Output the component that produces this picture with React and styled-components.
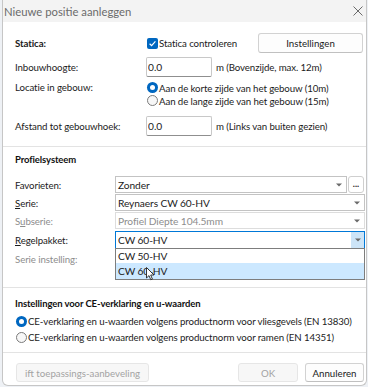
import React from 'react';
import styled, { createGlobalStyle, css } from 'styled-components';

const FONT = `'Lato', 'Noto Sans', sans-serif`;

const GlobalStyle = createGlobalStyle`
  html, body { margin: 0; padding: 0; }
  body {
    background: #eef1f5;
    font-family: ${FONT};
    font-size: 9.7px;
    letter-spacing: -0.1px;
    color: #1b1b1b;
  }
  * { box-sizing: border-box; }
`;

const Window = styled.div`
  margin-left: 2px;
  width: 365px;
  height: 386px;
  background: #fff;
  border: 1px solid #c6c6c6;
  border-top: none;
  border-radius: 0 0 6px 6px;
  display: flex;
  flex-direction: column;
  overflow: hidden;
`;

const TitleBar = styled.div`
  height: 22px;
  flex: none;
  background: #f3f3f3;
  display: flex;
  align-items: center;
  justify-content: space-between;
  padding: 0 3px 0 1px;
`;

const Title = styled.span`
  font-size: 11.3px;
  letter-spacing: 0;
  color: #6b6b6b;
`;

const Section = styled.section`
  padding: ${p => p.$pad};
  display: flex;
  flex-direction: column;
`;

const Divider = styled.div`
  height: 1px;
  flex: none;
  background: #e3e3e3;
`;

const SectionTitle = styled.div`
  height: 14px;
  line-height: 14px;
  font-weight: 700;
  font-size: 9.5px;
  color: #111;
`;

const Row = styled.div`
  display: grid;
  grid-template-columns: ${p => p.$cols};
  align-items: ${p => p.$align || 'center'};
  height: ${p => p.$h}px;
  margin-top: ${p => p.$mt || 0}px;
  position: relative;
`;

const Label = styled.span`
  color: ${p => (p.$disabled ? '#8d8d8d' : '#1b1b1b')};
  line-height: ${p => p.$lh || 'normal'};
  font-weight: ${p => (p.$bold ? 700 : 400)};
  white-space: nowrap;
`;

const Key = styled.u`
  text-decoration-thickness: 1px;
  text-underline-offset: 1px;
`;

const Inline = styled.div`
  display: flex;
  align-items: center;
  gap: ${p => p.$gap || 0}px;
  height: 100%;
  white-space: nowrap;
`;

const Stack = styled.div`
  display: flex;
  flex-direction: column;
  margin-top: ${p => p.$mt || 0}px;
`;

const CheckBox = styled.span`
  width: 11px;
  height: 11px;
  margin-left: 1px;
  border-radius: 2px;
  background: #0067c0;
  display: inline-flex;
  align-items: center;
  justify-content: center;
  flex: none;
`;

const RadioDot = styled.span`
  width: 11px;
  height: 11px;
  margin-left: 1px;
  border-radius: 50%;
  flex: none;
  ${p =>
    p.$checked
      ? css`
          background: #0067c0;
          display: inline-flex;
          align-items: center;
          justify-content: center;
          &::after {
            content: '';
            width: 5px;
            height: 5px;
            border-radius: 50%;
            background: #fff;
          }
        `
      : css`
          border: 1px solid #7b7b7b;
          background: #f7f7f7;
        `}
`;

const Option = styled.div`
  display: flex;
  align-items: center;
  gap: 1px;
  height: ${p => p.$h}px;
  white-space: nowrap;
`;

const TextInput = styled.input`
  width: 66px;
  height: 20px;
  border: 1px solid #c8c8c8;
  border-bottom-color: #8f8f8f;
  border-radius: 2px;
  padding: 0 0 0 1px;
  font: inherit;
  font-size: 10.2px;
  color: #1b1b1b;
  background: #fff;
  outline: none;
`;

const Unit = styled.span`
  margin-left: 4px;
`;

const Button = styled.button`
  height: ${p => p.$h || 20}px;
  width: ${p => p.$w}px;
  margin-right: ${p => p.$mr || 0}px;
  border-radius: 3px;
  font: inherit;
  padding: 0;
  ${p =>
    p.disabled
      ? css`
          background: #f7f7f7;
          border: 1px solid #e6e6e6;
          color: #a3a3a3;
        `
      : css`
          background: #fdfdfd;
          border: 1px solid #d2d2d2;
          border-bottom-color: #c0c0c0;
          color: #1b1b1b;
        `}
`;

const Combo = styled.div`
  position: relative;
  height: 100%;
  display: flex;
  align-items: center;
  justify-content: space-between;
  padding-left: 2px;
  font-size: 10.2px;
  background: #fff;
  border: 1px solid ${p => (p.$active ? '#0078d7' : p.$disabled ? '#dddddd' : '#c3c3c3')};
  color: ${p => (p.$disabled ? '#8d8d8d' : '#1b1b1b')};
  flex: ${p => (p.$grow ? 1 : 'none')};
`;

const ArrowBox = styled.span`
  align-self: stretch;
  width: 13px;
  display: flex;
  align-items: center;
  justify-content: center;
  background: ${p => (p.$active ? '#cce4f7' : 'transparent')};
  margin-right: ${p => (p.$active ? 0 : 1)}px;
`;

const MoreButton = styled.span`
  width: 16px;
  height: 100%;
  flex: none;
  margin-left: 1px;
  margin-right: 1px;
  border: 1px solid #cfcfcf;
  border-radius: 3px;
  display: flex;
  align-items: center;
  justify-content: center;
  font-weight: 700;
  font-size: 9px;
  letter-spacing: 0;
  line-height: 1;
  padding-bottom: 2px;
`;

const ComboWrap = styled.div`
  display: flex;
  height: 100%;
`;

const DropList = styled.ul`
  position: absolute;
  top: 100%;
  left: -1px;
  right: -1px;
  margin: 0;
  padding: 0;
  list-style: none;
  background: #fff;
  border: 1px solid #7d7d7d;
  z-index: 5;
`;

const DropItem = styled.li`
  height: ${p => p.$h}px;
  line-height: ${p => p.$h}px;
  padding-left: 2px;
  background: ${p => (p.$selected ? '#cce8ff' : '#fff')};
  position: relative;
`;

const Cursor = styled.svg`
  position: absolute;
  left: 30px;
  top: 4px;
`;

const Footer = styled.div`
  flex: 1;
  display: flex;
  justify-content: space-between;
  align-items: flex-start;
  padding: 10px 2px 0 13px;
`;

const ButtonGroup = styled.div`
  display: flex;
  gap: 7px;
`;

const Arrow = () => (
  <svg width="6" height="4" viewBox="0 0 6 4">
    <path d="M0 0.5 H6 L3 3.5 Z" fill="#6a6a6a" />
  </svg>
);

const Check = () => (
  <svg width="9" height="9" viewBox="0 0 9 9">
    <path d="M1.6 4.7 L3.6 6.6 L7.4 2.4" fill="none" stroke="#fff" strokeWidth="1.2" />
  </svg>
);

const CloseIcon = () => (
  <svg width="10" height="10" viewBox="0 0 10 10">
    <path d="M0.5 0.5 L9.5 9.5 M9.5 0.5 L0.5 9.5" stroke="#6a6a6a" strokeWidth="1" />
  </svg>
);

export default function App() {
  return (
    <>
      <GlobalStyle />
      <Window>
        <TitleBar>
          <Title>Nieuwe positie aanleggen</Title>
          <CloseIcon />
        </TitleBar>

        <Section $pad="11px 1px 10px 12px">
          <Row $cols="131px 1fr auto" $h={20}>
            <Label $bold>Statica:</Label>
            <Inline $gap={1}>
              <CheckBox>
                <Check />
              </CheckBox>
              <span>Statica controleren</span>
            </Inline>
            <Button $w={105} $mr={2}>Instellingen</Button>
          </Row>
          <Row $cols="131px 1fr" $h={20} $mt={4}>
            <Label>Inbouwhoogte:</Label>
            <Inline>
              <TextInput defaultValue="0.0" readOnly />
              <Unit>m (Bovenzijde, max. 12m)</Unit>
            </Inline>
          </Row>
          <Row $cols="131px 1fr" $h={26} $mt={4} $align="start">
            <Label $lh="13px">Locatie in gebouw:</Label>
            <Stack>
              <Option $h={13}>
                <RadioDot $checked />
                <span>Aan de korte zijde van het gebouw (10m)</span>
              </Option>
              <Option $h={13}>
                <RadioDot />
                <span>Aan de lange zijde van het gebouw (15m)</span>
              </Option>
            </Stack>
          </Row>
          <Row $cols="131px 1fr" $h={20} $mt={9}>
            <Label>Afstand tot gebouwhoek:</Label>
            <Inline>
              <TextInput defaultValue="0.0" readOnly />
              <Unit>m (Links van buiten gezien)</Unit>
            </Inline>
          </Row>
        </Section>
        <Divider />

        <Section $pad="6px 1px 19px 12px">
          <SectionTitle>Profielsysteem</SectionTitle>
          <Row $cols="100px 1fr" $h={17} $mt={9}>
            <Label>Favorieten:</Label>
            <ComboWrap>
              <Combo $grow>
                <span>Zonder</span>
                <ArrowBox>
                  <Arrow />
                </ArrowBox>
              </Combo>
              <MoreButton>...</MoreButton>
            </ComboWrap>
          </Row>
          <Row $cols="100px 1fr" $h={17} $mt={1}>
            <Label>
              <Key>S</Key>erie:
            </Label>
            <Combo>
              <span>Reynaers CW 60-HV</span>
              <ArrowBox>
                <Arrow />
              </ArrowBox>
            </Combo>
          </Row>
          <Row $cols="100px 1fr" $h={17} $mt={1}>
            <Label $disabled>
              S<Key>u</Key>bserie:
            </Label>
            <Combo $disabled>
              <span>Profiel Diepte 104.5mm</span>
              <ArrowBox>
                <Arrow />
              </ArrowBox>
            </Combo>
          </Row>
          <Row $cols="100px 1fr" $h={18} $mt={2} style={{ zIndex: 3 }}>
            <Label>
              <Key>R</Key>egelpakket:
            </Label>
            <Combo $active>
              <span>CW 60-HV</span>
              <ArrowBox $active>
                <Arrow />
              </ArrowBox>
              <DropList>
                <DropItem $h={14}>CW 50-HV</DropItem>
                <DropItem $h={16} $selected>
                  CW 60-HV
                  <Cursor width="9" height="14" viewBox="0 0 9 14">
                    <path
                      d="M0.5 0.5 V11 L3 8.6 L4.8 12.8 L6.4 12.1 L4.7 8 H8 Z"
                      fill="#fff"
                      stroke="#222"
                      strokeWidth="0.9"
                      strokeLinejoin="round"
                    />
                  </Cursor>
                </DropItem>
              </DropList>
            </Combo>
          </Row>
          <Row $cols="100px 1fr" $h={18} $mt={1}>
            <Label $disabled>Serie instelling:</Label>
          </Row>
        </Section>
        <Divider />

        <Section $pad="9px 1px 7px 12px">
          <SectionTitle>Instellingen voor CE-verklaring en u-waarden</SectionTitle>
          <Stack $mt={2}>
            <Option $h={16}>
              <RadioDot $checked />
              <span>CE-verklaring en u-waarden volgens productnorm voor vliesgevels (EN 13830)</span>
            </Option>
            <Option $h={16}>
              <RadioDot />
              <span>CE-verklaring en u-waarden volgens productnorm voor ramen (EN 14351)</span>
            </Option>
          </Stack>
        </Section>
        <Divider />

        <Footer>
          <Button $w={133} $h={19} disabled>
            ift toepassings-aanbeveling
          </Button>
          <ButtonGroup>
            <Button $w={60} $h={19} disabled>
              OK
            </Button>
            <Button $w={59} $h={19}>
              Annuleren
            </Button>
          </ButtonGroup>
        </Footer>
      </Window>
    </>
  );
}
